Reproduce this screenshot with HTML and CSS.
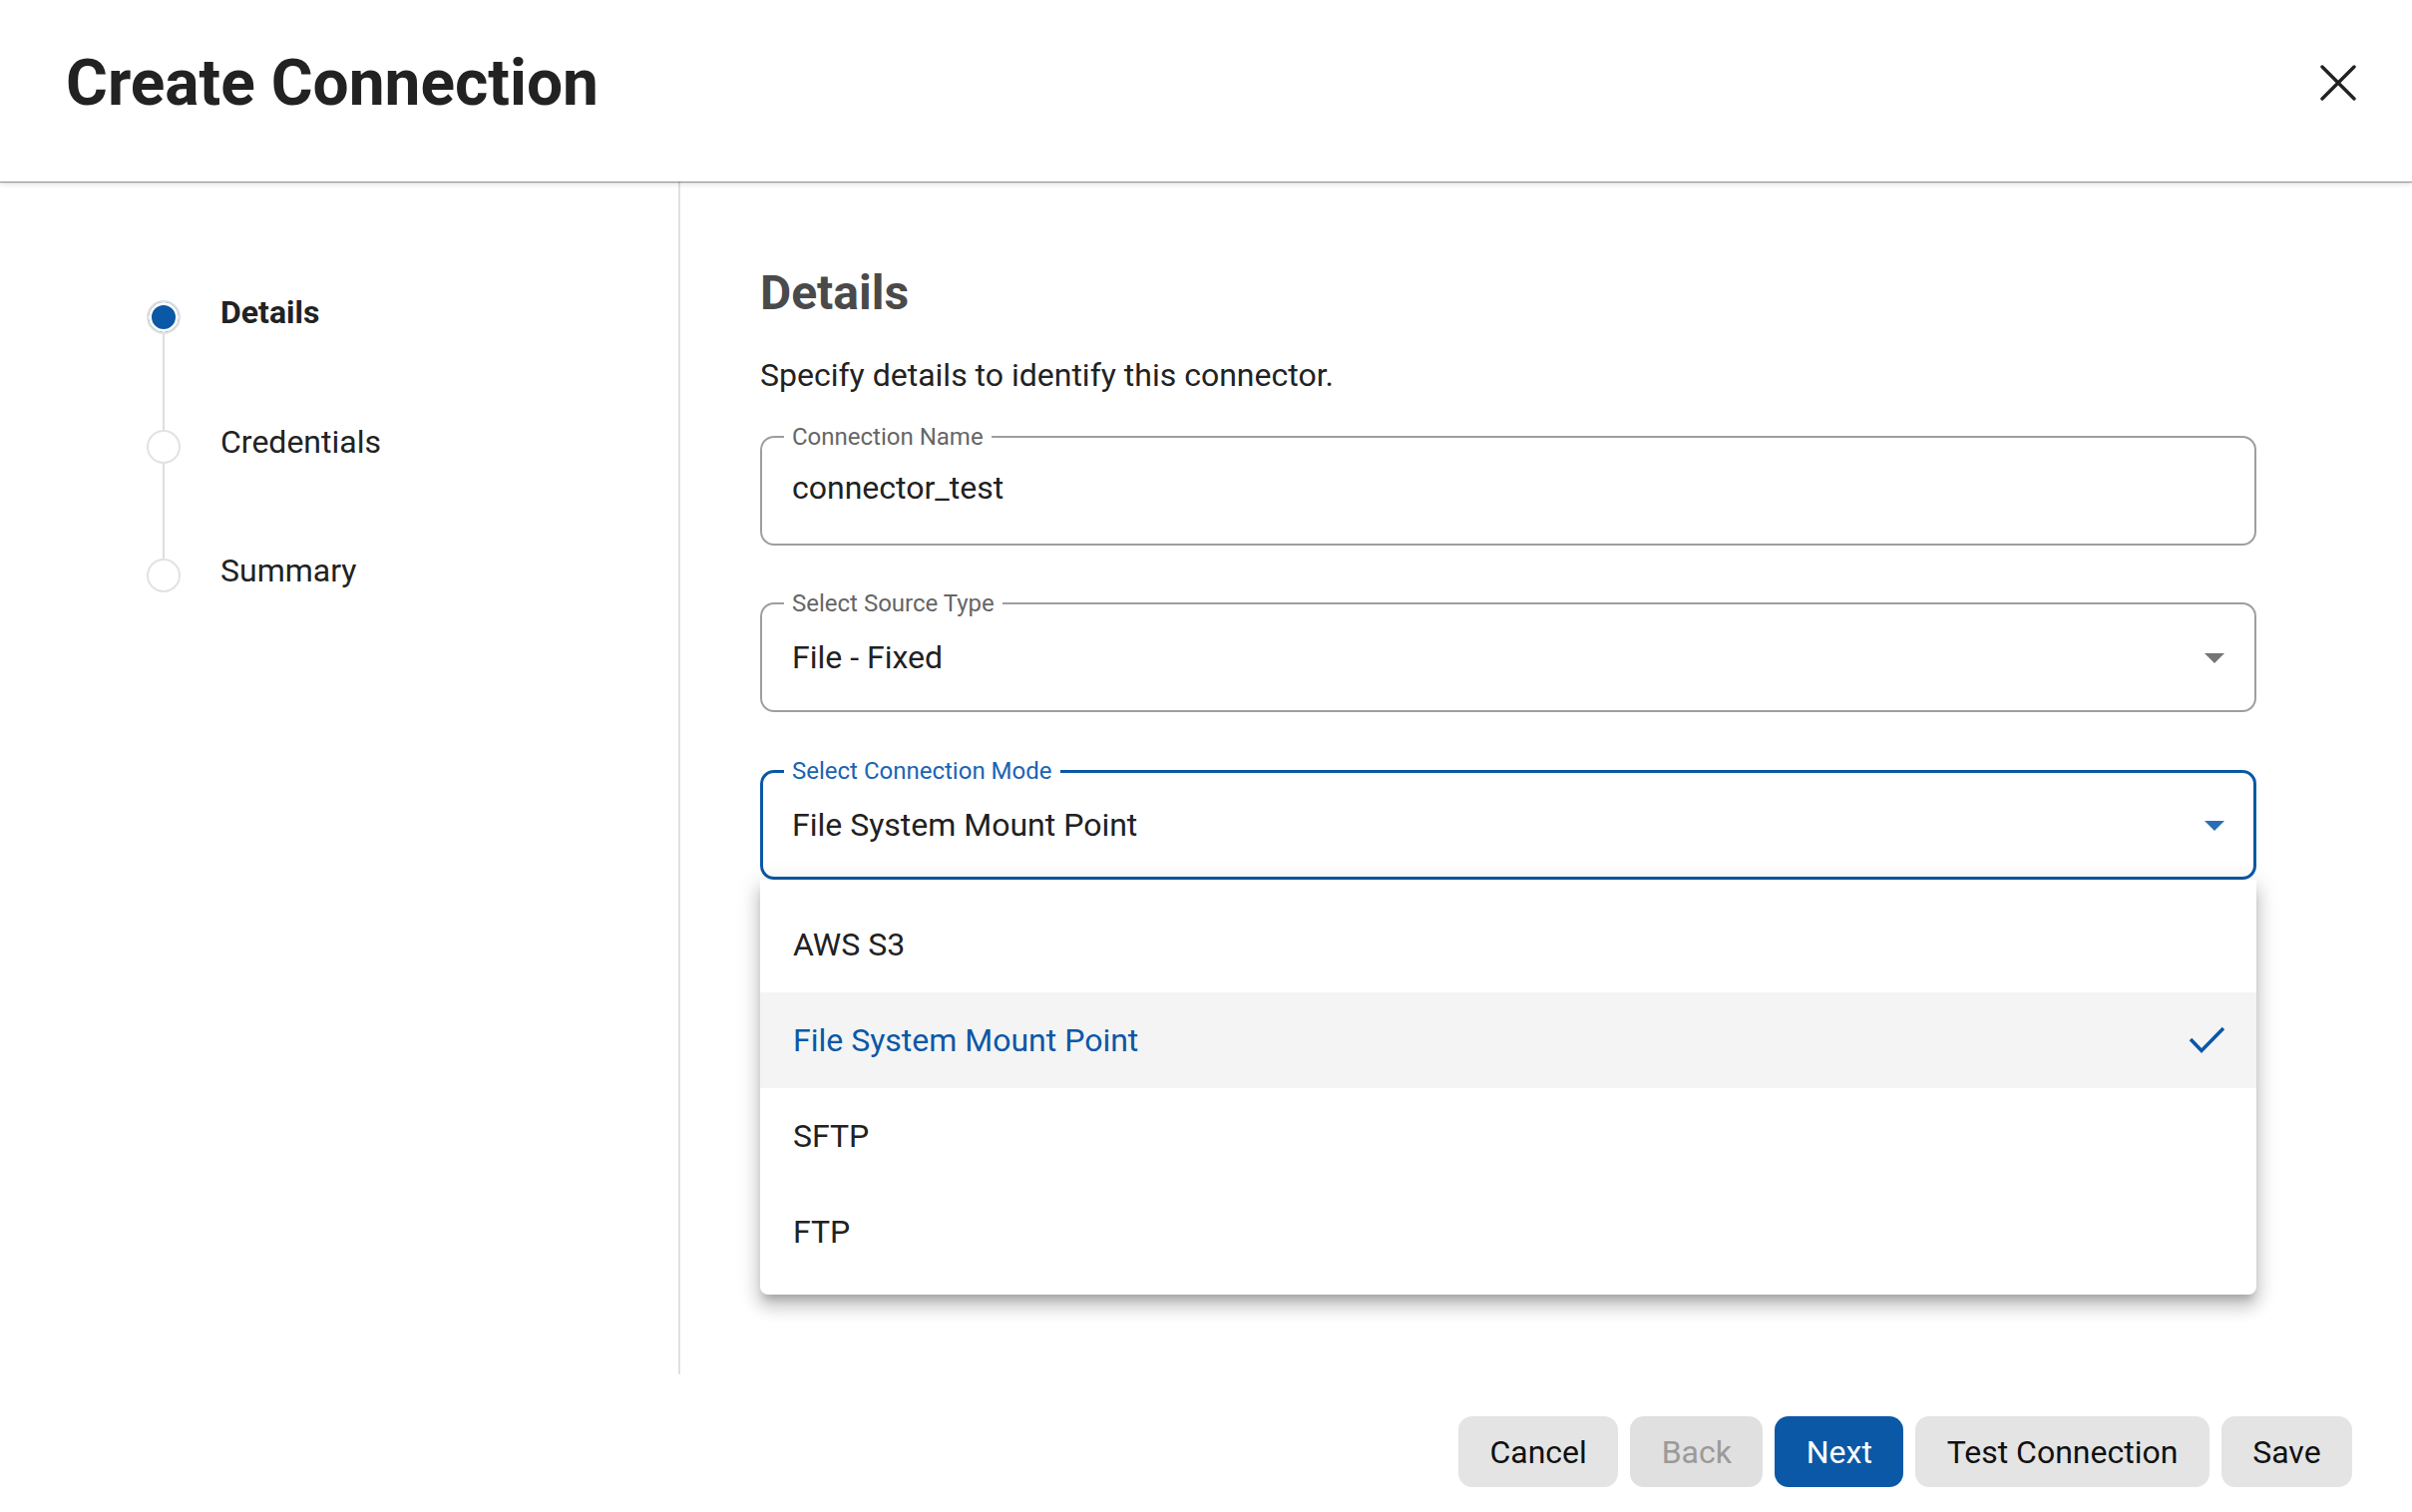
FILE: index.html
```html
<!DOCTYPE html>
<html lang="en">
<head>
    <meta charset="UTF-8">
    <meta name="viewport" content="width=device-width, initial-scale=1.0">
    <title>Create Connection</title>
    <link rel="stylesheet" href="styles.css">
</head>
<body>
    <div class="dialog">
        <!-- Header -->
        <header class="dialog-header">
            <h1>Create Connection</h1>
            <button class="close-btn" aria-label="Close">
                <svg width="36" height="36" viewBox="0 0 36 36">
                    <path d="M2 2L34 34M34 2L2 34" stroke="#222" stroke-width="3.4" stroke-linecap="round" fill="none"/>
                </svg>
            </button>
        </header>

        <div class="dialog-body">
            <!-- Stepper -->
            <aside class="sidebar">
                <div class="step active">
                    <div class="step-rail"><span class="dot"></span><span class="rail-line"></span></div>
                    <span class="step-label">Details</span>
                </div>
                <div class="step">
                    <div class="step-rail"><span class="dot"></span><span class="rail-line"></span></div>
                    <span class="step-label">Credentials</span>
                </div>
                <div class="step last">
                    <div class="step-rail"><span class="dot"></span></div>
                    <span class="step-label">Summary</span>
                </div>
            </aside>

            <!-- Form -->
            <main class="main">
                <h2>Details</h2>
                <p class="subtitle">Specify details to identify this connector.</p>

                <div class="field text">
                    <span class="field-label">Connection Name</span>
                    <span class="field-value">connector_test</span>
                </div>

                <div class="field select">
                    <span class="field-label">Select Source Type</span>
                    <span class="field-value">File - Fixed</span>
                    <svg class="arrow" width="20" height="10" viewBox="0 0 20 10"><polygon points="0,0 20,0 10,10" fill="#757575"/></svg>
                </div>

                <div class="field select focused">
                    <span class="field-label">Select Connection Mode</span>
                    <span class="field-value">File System Mount Point</span>
                    <svg class="arrow" width="20" height="10" viewBox="0 0 20 10"><polygon points="0,0 20,0 10,10" fill="#2a6db5"/></svg>

                    <ul class="menu">
                        <li>AWS S3</li>
                        <li class="selected">
                            File System Mount Point
                            <svg width="36" height="28" viewBox="0 0 36 28"><polyline points="2,13 13,24.5 35,2" fill="none" stroke="#0a58a6" stroke-width="3.6"/></svg>
                        </li>
                        <li>SFTP</li>
                        <li>FTP</li>
                    </ul>
                </div>
            </main>
        </div>

        <!-- Footer buttons -->
        <footer class="dialog-footer">
            <button class="btn">Cancel</button>
            <button class="btn disabled">Back</button>
            <button class="btn primary">Next</button>
            <button class="btn">Test Connection</button>
            <button class="btn">Save</button>
        </footer>
    </div>
</body>
</html>
```

FILE: styles.css
```css
* {
    box-sizing: border-box;
}
body {
    margin: 0;
    font-family: Roboto, "Noto Sans", Arial, sans-serif;
    color: #212121;
    background: #fff;
}
.dialog {
    width: 2418px;
    height: 1516px;
    display: flex;
    flex-direction: column;
    overflow: hidden;
}

/* header */
.dialog-header {
    position: relative;
    z-index: 2;
    height: 182px;
    flex-shrink: 0;
    display: flex;
    align-items: center;
    justify-content: space-between;
    padding: 0 56px 16px 66px;
    background: #fff;
    box-shadow: 0 1px 1px rgba(0, 0, 0, 0.35), 0 2px 6px rgba(0, 0, 0, 0.15);
}
.dialog-header h1 {
    margin: 0;
    font-size: 64px;
    line-height: 75px;
    font-weight: 700;
    color: #222;
}
.close-btn {
    border: none;
    background: none;
    padding: 0;
    width: 36px;
    height: 36px;
    cursor: pointer;
}
.close-btn svg {
    display: block;
}

/* body */
.dialog-body {
    display: flex;
    height: 1196px;
    flex-shrink: 0;
}
.sidebar {
    width: 682px;
    flex-shrink: 0;
    border-right: 2px solid #e0e0e0;
    padding: 119px 0 0 147px;
}
.step {
    display: flex;
    height: 129.5px;
}
.step.last {
    height: auto;
}
.step-rail {
    width: 34px;
    display: flex;
    flex-direction: column;
    align-items: center;
}
.dot {
    width: 34px;
    height: 34px;
    border-radius: 50%;
    border: 2px solid #e2e2e2;
    background: #fff;
    flex-shrink: 0;
}
.step.active .dot {
    background: #0a58a6;
    box-shadow: inset 0 0 0 3px #fff;
}
.rail-line {
    flex: 1;
    width: 2px;
    background: #dedede;
}
.step-label {
    margin-left: 40px;
    font-size: 32px;
    line-height: 25px;
    color: #222;
}
.step.active .step-label {
    font-weight: 700;
}

.main {
    flex: 1;
    padding: 84px 156px 0 80px;
}
.main h2 {
    margin: 0;
    font-size: 48px;
    line-height: 56px;
    font-weight: 700;
    color: #4a4a4a;
}
.subtitle {
    margin: 34px 0 41px;
    font-size: 32px;
    line-height: 40px;
    color: #222;
}

/* outlined fields */
.field {
    position: relative;
    height: 110px;
    border: 2px solid #9e9e9e;
    border-radius: 14px;
    padding: 0 30px;
    display: flex;
    align-items: center;
    margin-bottom: 57px;
}
.field.text {
    padding-bottom: 6px;
}
.field-label {
    position: absolute;
    left: 22px;
    top: -15px;
    padding: 0 8px;
    background: #fff;
    font-size: 24px;
    line-height: 28px;
    color: #666;
}
.field-value {
    font-size: 32px;
    line-height: 40px;
    color: #212121;
}
.field .arrow {
    position: absolute;
    right: 30px;
    top: 50%;
    margin-top: -4px;
}
.field.focused {
    border: 3px solid #0a58a6;
    padding: 0 29px;
    margin-top: 58px;
}
.field.focused .field-label {
    left: 21px;
    top: -16px;
    color: #1a64b3;
}
.field.focused .arrow {
    right: 29px;
}

/* dropdown */
.menu {
    position: absolute;
    z-index: 3;
    left: -3px;
    right: -3px;
    top: 107px;
    margin: 0;
    padding: 17px 0 15px;
    list-style: none;
    background: #fff;
    border-radius: 0 0 8px 8px;
    box-shadow: 0 8px 8px -4px rgba(0, 0, 0, 0.2), 0 12px 16px 2px rgba(0, 0, 0, 0.14), 0 5px 22px 4px rgba(0, 0, 0, 0.1);
}
.menu li {
    height: 96px;
    display: flex;
    align-items: center;
    justify-content: space-between;
    padding: 0 32px 0 33px;
    font-size: 32px;
    color: #212121;
}
.menu li.selected {
    background: #f4f4f4;
    color: #0a58a6;
}
.menu li svg {
    display: block;
}

/* footer */
.dialog-footer {
    flex: 1;
    display: flex;
    justify-content: flex-end;
    align-items: flex-start;
    gap: 12px;
    padding: 42px 60px 0 0;
}
.btn {
    height: 71px;
    padding: 0 31.4px;
    border: none;
    border-radius: 14px;
    background: #e4e4e4;
    color: #111;
    font-family: Roboto, Arial, sans-serif;
    font-size: 32px;
    cursor: pointer;
}
.btn.disabled {
    background: #e0e0e0;
    color: #9a9a9a;
}
.btn.primary {
    background: #0a58a6;
    color: #fff;
}
```
